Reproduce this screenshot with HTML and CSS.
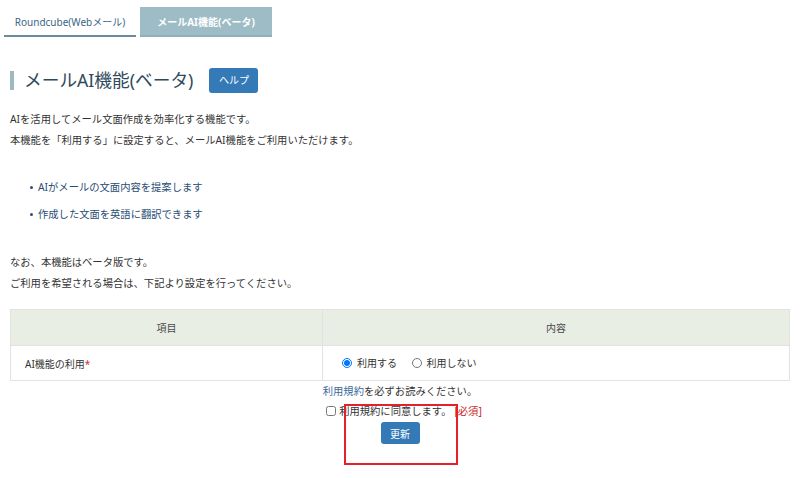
FILE: index.html
```html
<!DOCTYPE html>
<html lang="ja">
<head>
    <meta charset="UTF-8">
    <title>メールAI機能(ベータ)</title>
    <link rel="stylesheet" href="styles.css">
</head>
<body>
    <nav class="tabs">
        <a href="#" class="tab">Roundcube(Webメール)</a>
        <a href="#" class="tab active">メールAI機能(ベータ)</a>
    </nav>
    <div class="page">
        <div class="title-row">
            <h1>メールAI機能(ベータ)</h1>
            <a href="#" class="btn btn-help">ヘルプ</a>
        </div>
        <p class="lead">AIを活用してメール文面作成を効率化する機能です。<br>本機能を「利用する」に設定すると、メールAI機能をご利用いただけます。</p>
        <ul class="features">
            <li>AIがメールの文面内容を提案します</li>
            <li>作成した文面を英語に翻訳できます</li>
        </ul>
        <p class="note">なお、本機能はベータ版です。<br>ご利用を希望される場合は、下記より設定を行ってください。</p>
        <table class="settings">
            <thead>
                <tr>
                    <th class="col-item">項目</th>
                    <th>内容</th>
                </tr>
            </thead>
            <tbody>
                <tr>
                    <td>AI機能の利用<span class="req">*</span></td>
                    <td>
                        <label class="radio"><input type="radio" name="use" checked> 利用する</label>
                        <label class="radio"><input type="radio" name="use"> 利用しない</label>
                    </td>
                </tr>
            </tbody>
        </table>
        <div class="submit-area">
            <p class="terms"><a href="#">利用規約</a>を必ずお読みください。</p>
            <label class="agree"><input type="checkbox"> 利用規約に同意します。<span class="must">[必須]</span></label>
            <button class="btn btn-update">更新</button>
            <div class="highlight"></div>
        </div>
    </div>
</body>
</html>
```

FILE: styles.css
```css
body {
    font-family: 'Noto Sans', 'Noto Sans CJK JP', sans-serif;
    margin: 0;
    background: #fff;
    color: #333;
    font-size: 10.3px;
}

.tabs {
    display: flex;
    gap: 4px;
    padding: 7px 4px 0 4px;
    height: 30px;
}

.tab {
    display: flex;
    align-items: center;
    justify-content: center;
    width: 132px;
    height: 28px;
    text-decoration: none;
    font-size: 10px;
    color: #3d6585;
    border-bottom: 2px solid #6a8b9c;
}

.tab.active {
    background: #9dbcc5;
    color: #fff;
    font-weight: bold;
    border-bottom-color: #8fb0ba;
}

.page {
    padding: 0 10px;
}

.title-row {
    display: flex;
    align-items: center;
    margin-top: 30px;
    height: 26px;
}

.title-row h1 {
    margin: 0;
    font-size: 17.7px;
    font-weight: normal;
    color: #2f4a5c;
    border-left: 4px solid #9dbac2;
    padding-left: 10px;
    line-height: 19px;
}

.btn {
    display: inline-block;
    background: #337ab7;
    color: #fff;
    border: none;
    border-radius: 3px;
    text-decoration: none;
    font-family: inherit;
    cursor: pointer;
}

.btn-help {
    margin-left: 16px;
    width: 49px;
    height: 25px;
    line-height: 24px;
    text-align: center;
    font-size: 10px;
}

.lead {
    margin: 16px 0 0 0;
    line-height: 21px;
}

.features {
    margin: 23px 0 0 0;
    padding-left: 28px;
    color: #2a4d75;
    list-style: none;
}

.features li {
    line-height: 27px;
    position: relative;
}

.features li::before {
    content: "";
    position: absolute;
    left: -8px;
    top: 12px;
    width: 3px;
    height: 3px;
    border-radius: 50%;
    background: #2a4d75;
}

.note {
    margin: 24px 0 0 0;
    line-height: 21px;
}

.settings {
    width: 100%;
    border-collapse: collapse;
    margin-top: 15px;
}

.settings th,
.settings td {
    border: 1px solid #e2e2e2;
    font-size: 10px;
}

.settings th {
    background: #e8eee3;
    color: #4a4a4a;
    font-weight: normal;
    height: 35px;
    padding: 0;
}

.settings .col-item {
    width: 311px;
}

.settings td {
    height: 34px;
    padding: 0 14px;
}

.settings td + td {
    padding-left: 19px;
}

.req {
    color: #d0312d;
}

.radio {
    display: inline-flex;
    align-items: center;
    gap: 5px;
    margin-right: 12px;
}

.radio input {
    margin: 0;
    width: 10px;
    height: 10px;
}

.submit-area {
    position: relative;
    display: flex;
    flex-direction: column;
    align-items: center;
    padding-bottom: 30px;
}

.terms {
    margin: 2px 0 0 0;
    line-height: 16px;
}

.terms a {
    color: #3a6a9a;
    text-decoration: none;
}

.agree {
    display: flex;
    align-items: center;
    gap: 3px;
    margin-top: 4px;
    margin-left: 8px;
    line-height: 16px;
}

.agree input {
    margin: 0;
    width: 10px;
    height: 10px;
}

.must {
    color: #c8252a;
}

.btn-update {
    margin-top: 3px;
    width: 39px;
    height: 22px;
    font-size: 10px;
    padding: 0;
}

.highlight {
    position: absolute;
    left: 334px;
    top: 23px;
    width: 110px;
    height: 57px;
    border: 2px solid #e5202a;
}
```
